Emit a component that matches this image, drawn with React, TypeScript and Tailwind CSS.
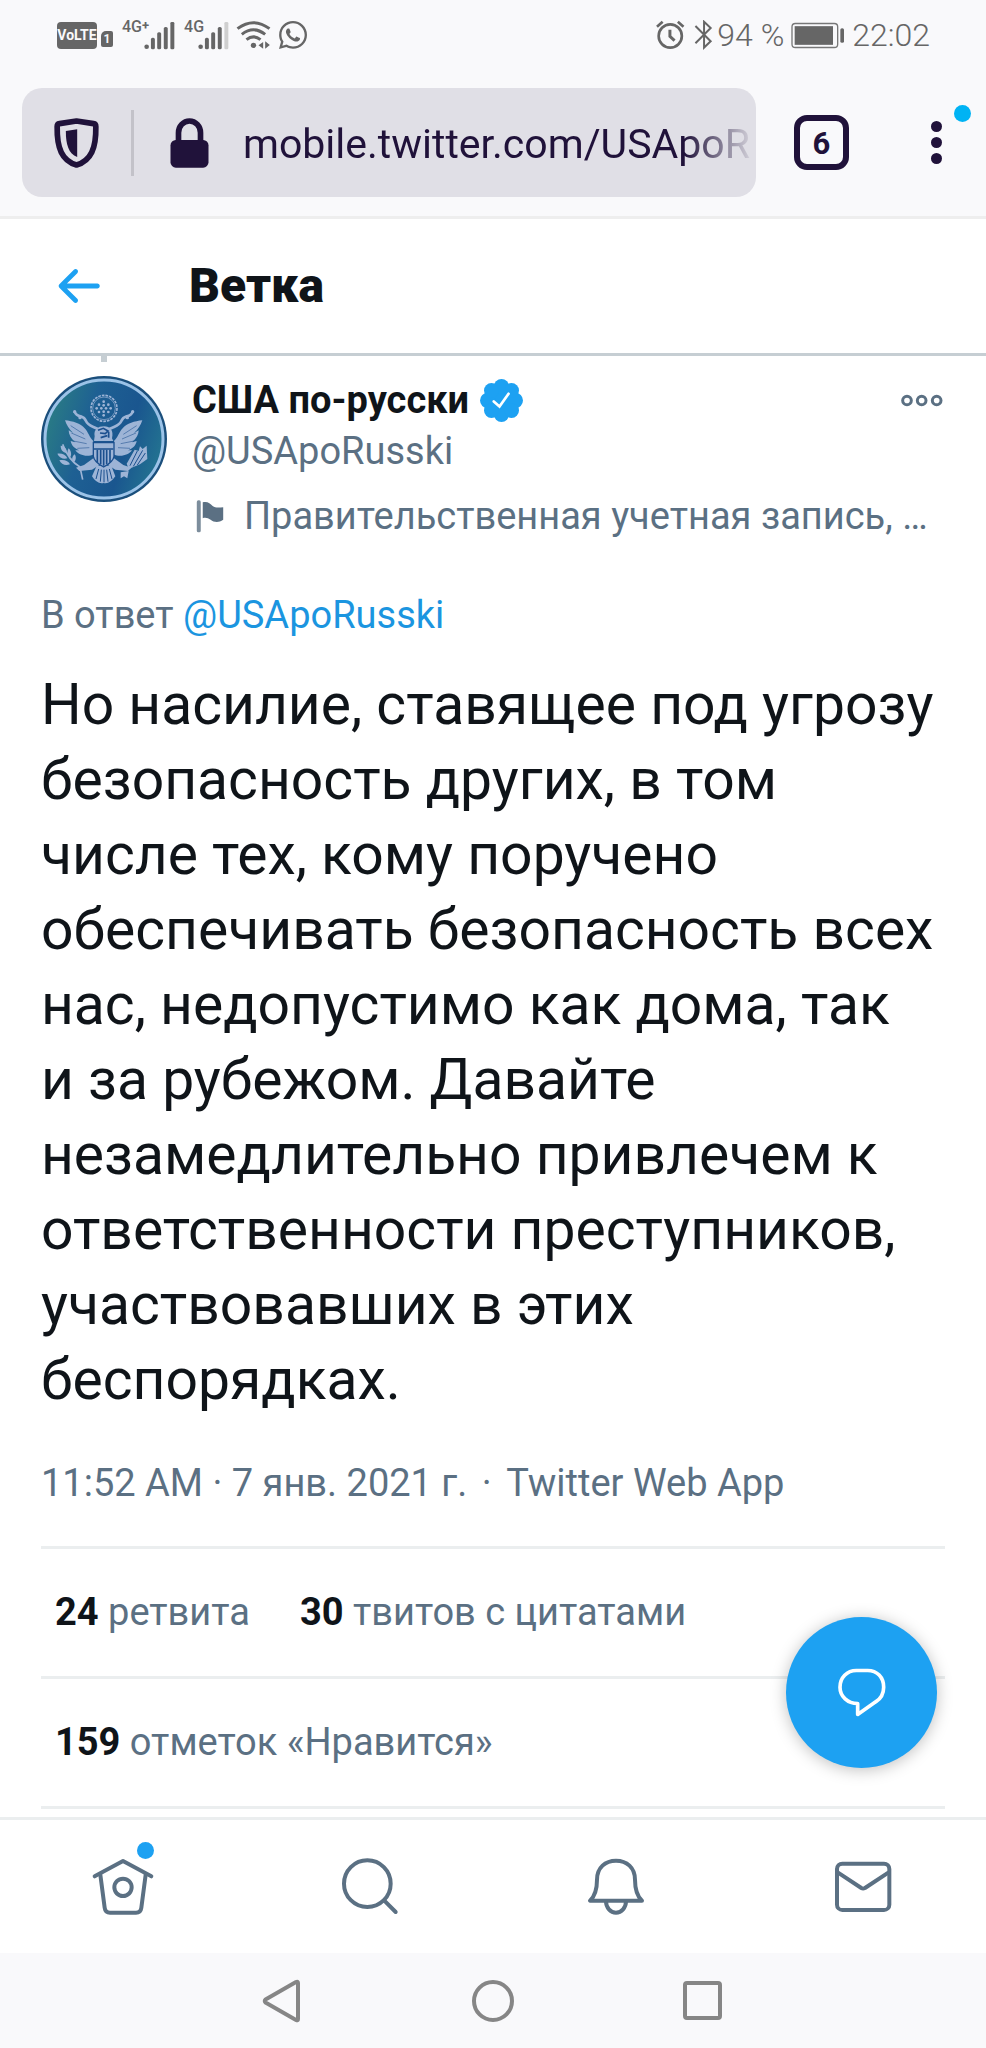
import React from "react";
import { FaWhatsapp } from "react-icons/fa";

function SignalBars({ weakLast = false }: { weakLast?: boolean }) {
  return (
    <svg viewBox="310 54 94 88" className="h-[29px] w-[31px] shrink-0" fill="#666" aria-hidden="true">
      <circle cx="318" cy="132" r="7" />
      <rect x="331" y="105" width="12" height="35" rx="5" />
      <rect x="350" y="88" width="12" height="52" rx="5" />
      <rect x="370" y="72" width="12" height="68" rx="5" />
      <rect x="390" y="57" width="12" height="83" rx="4" fill={weakLast ? "#cfcfcf" : "#666"} />
    </svg>
  );
}

function StatusBar() {
  return (
    <div className="flex h-[70px] items-center justify-between pr-14 pl-[57px] text-[#666]">
      <div className="flex items-center">
        <span className="flex h-[27px] w-10 items-center justify-center rounded-[4px] bg-[#666] text-[14px] font-bold text-[#f9f9fb]">
          VoLTE
        </span>
        <span className="mt-2 ml-1 flex h-4 w-3 items-center justify-center rounded-[2px] rounded-tl-[5px] bg-[#666] text-[12px] font-bold text-[#f9f9fb]">
          1
        </span>
        <span className="mb-4 ml-[9px] text-[16px] leading-[16px] font-medium">4G</span>
        <span className="mb-5 -mr-[5px] text-[13px] leading-[13px] font-bold">+</span>
        <SignalBars />
        <span className="mb-4 ml-[9px] -mr-[6px] text-[16px] leading-[16px] font-medium">4G</span>
        <SignalBars weakLast />
        <svg viewBox="592 54 104 90" className="ml-[7px] h-[30px] w-[35px]" fill="none" stroke="#666" strokeWidth="9" aria-hidden="true">
          <path d="M596 80Q644 44 692 80" />
          <path d="M609 97Q644 70 679 97" />
          <path d="M623 113Q644 96 665 113" />
          <circle cx="644" cy="130" r="8" fill="#666" stroke="none" />
          <path d="M659 130l14-10v20zM679 118l14 11-14 11z" fill="#666" stroke="none" />
        </svg>
        <FaWhatsapp className="ml-[6px] h-8 w-8" aria-hidden="true" />
      </div>
      <div className="flex items-center">
        <svg viewBox="50 54 172 90" className="h-[30px] w-[57px]" fill="none" stroke="#666" aria-hidden="true">
          <circle cx="93" cy="102" r="35" strokeWidth="8" />
          <path d="M92 83v20l14 13" strokeWidth="9" />
          <path d="M53 74l17-15M116 59l17 15" strokeWidth="8" />
          <path d="M169 72l46 46-20 19V59l20 19-46 46" strokeWidth="6" />
        </svg>
        <span className="ml-1 text-[32px] leading-[36px] font-light">94 %</span>
        <svg viewBox="454 60 162 80" className="ml-[7px] h-[27px] w-[54px]" aria-hidden="true">
          <rect x="457" y="64" width="137" height="72" rx="10" fill="none" stroke="#777" strokeWidth="4" />
          <rect x="465" y="72" width="115" height="56" fill="#666" />
          <rect x="602" y="78" width="11" height="44" rx="5" fill="#666" />
        </svg>
        <span className="ml-[7px] text-[32px] leading-[36px] font-light">22:02</span>
      </div>
    </div>
  );
}

function AddressBar() {
  return (
    <div className="flex items-center border-b-3 border-[#eeeeee] pt-[18px] pr-[44px] pb-[19px] pl-[22px]">
      <div className="flex h-[109px] min-w-0 flex-1 items-center rounded-[20px] bg-[#e0dfe6] pl-[32px]">
        <svg viewBox="163 142 134 150" className="h-[50px] w-[45px] shrink-0" aria-hidden="true">
          <path
            d="M230 151L281 159Q288 160 288 168C289 232 274 270 230 283C186 270 171 232 172 168Q172 160 179 159Z"
            fill="none"
            stroke="#20123a"
            strokeWidth="17"
            strokeLinejoin="round"
          />
          <path d="M232 176v83C206 249 198 222 198 181z" fill="#20123a" />
        </svg>
        <span className="ml-[32px] h-[66px] w-[3px] shrink-0 bg-[#c3c2c9]" />
        <svg viewBox="509 142 116 150" className="ml-9 h-[50px] w-[39px] shrink-0" aria-hidden="true">
          <path d="M534 216v-30a33 35 0 0 1 66 0v30" fill="none" stroke="#20123a" strokeWidth="17" />
          <rect x="510" y="208" width="114" height="83" rx="16" fill="#20123a" />
        </svg>
        <input
          type="text"
          aria-label="URL"
          defaultValue="mobile.twitter.com/USApoR"
          className="ml-[34px] h-[66px] min-w-0 flex-1 bg-transparent pt-[2px] text-[41px] text-[#20123a] outline-none [mask-image:linear-gradient(to_right,black_86%,transparent)]"
        />
      </div>
      <button
        type="button"
        className="ml-[38px] flex h-[55px] w-[55px] shrink-0 items-center justify-center rounded-[13px] border-6 border-[#20123a] pt-[2px] text-[31px] leading-none font-bold text-[#20123a]"
      >
        6
      </button>
      <button type="button" aria-label="Menu" className="relative ml-[82px] flex shrink-0 flex-col gap-[5px]">
        <span className="h-[11px] w-[11px] rounded-full bg-[#20123a]" />
        <span className="h-[11px] w-[11px] rounded-full bg-[#20123a]" />
        <span className="h-[11px] w-[11px] rounded-full bg-[#20123a]" />
        <span className="absolute -top-4 left-[23px] h-[17px] w-[17px] rounded-full bg-[#00b3f4]" />
      </button>
    </div>
  );
}

function PageHeader() {
  return (
    <header className="flex h-[137px] items-center border-b-3 border-[#c6ced3] bg-white pl-[49px]">
      <a href="#back" aria-label="Back" className="text-[#1da1f2]">
        <svg viewBox="0 0 24 24" className="h-[58px] w-[58px]" fill="currentColor" aria-hidden="true">
          <path d="M20 11H7.414l4.293-4.293c.39-.39.39-1.023 0-1.414s-1.023-.39-1.414 0l-6 6c-.39.39-.39 1.023 0 1.414l6 6c.195.195.45.293.707.293s.512-.098.707-.293c.39-.39.39-1.023 0-1.414L7.414 13H20c.553 0 1-.447 1-1s-.447-1-1-1z" />
        </svg>
      </a>
      <h1 className="ml-[82px] text-[48px] leading-[56px] font-black text-[#0f1419]">Ветка</h1>
    </header>
  );
}

const stars = [
  [221, 154], [207, 163], [221, 165], [235, 163], [200, 174], [214, 174], [228, 174], [242, 174], [207, 185], [221, 184], [235, 185], [221, 195],
];

function Seal() {
  return (
    <svg viewBox="33 77 378 378" className="h-[126px] w-[126px] shrink-0" role="img" aria-label="США по-русски">
      <defs>
        <linearGradient id="sea" x1="0" y1="0.3" x2="1" y2="0.6">
          <stop offset="0" stopColor="#2a7d84" />
          <stop offset="0.35" stopColor="#1e6093" />
          <stop offset="0.7" stopColor="#1a568f" />
          <stop offset="1" stopColor="#237391" />
        </linearGradient>
        <g id="wing">
          <path d="M192 312C170 322 146 314 136 300L148 300C132 294 124 284 122 272L136 276C122 264 116 252 116 240L130 248C116 236 110 224 105 210C128 212 152 220 164 234C176 246 178 262 190 272Z" />
          <path d="M134 184Q138 196 152 198Q164 202 168 212T190 230L204 236" fill="none" stroke="#9db4d6" strokeWidth="8" />
          <circle cx="134" cy="184" r="5" />
          <circle cx="150" cy="202" r="5" />
          <path d="M192 322L162 344 138 352 148 362 186 358 208 344Z" />
        </g>
      </defs>
      <circle cx="222" cy="266" r="189" fill="#1b4f7c" />
      <circle cx="222" cy="266" r="177" fill="url(#sea)" stroke="#9cc3e8" strokeWidth="9" />
      <circle cx="222" cy="174" r="39" fill="none" stroke="#9db4d6" strokeWidth="5" strokeDasharray="8 3" />
      <circle cx="222" cy="174" r="34" fill="none" stroke="#9db4d6" strokeWidth="2" />
      {stars.map(([x, y]) => (
        <circle key={`${x}-${y}`} cx={x} cy={y} r="4" fill="#9db4d6" />
      ))}
      <g fill="#9db4d6">
        <use href="#wing" />
        <use href="#wing" transform="translate(442 0) scale(-1 1)" />
        <path d="M194 258C190 238 204 228 222 228C240 228 252 240 246 264L250 272H192Z" />
        <path d="M200 346L244 346 256 378Q240 402 221 398Q200 402 186 378Z" />
        <path d="M190 276H252V318C252 334 236 342 221 350C206 342 190 334 190 318Z" />
        <path d="M92 286c14 2 20 12 18 22c-12-2-18-10-18-22zM116 294c8 8 10 20 4 28c-8-8-10-18-4-28zM82 310c14-2 26 4 30 14c-12 4-24-2-30-14zM88 330c14-4 28 2 32 12c-14 6-26 0-32-12zM134 312c6 8 4 20-4 26c-6-10-4-20 4-26z" />
        <path d="M290 340L314 298 326 302 330 288 338 296 350 286 352 326 330 342 296 356ZM272 366l24-4-4 22-10-6-10 6z" />
      </g>
      <path d="M98 282Q116 330 150 350L158 388" fill="none" stroke="#9db4d6" strokeWidth="5" />
      <g fill="none" stroke="#1b4f8e">
        <path d="M190 276h62M192 296h58" strokeWidth="5" />
        <path d="M202 298v38M212 298v44M221 298v48M230 298v44M240 298v38" strokeWidth="5" />
        <path d="M204 240l16-6 14 8-8 8-16-2M236 244v18M212 262l20-6" strokeWidth="5" />
        <path d="M190 274v44q2 16 31 32q29-16 31-32v-44" strokeWidth="4" />
        <path d="M206 356l-8 30M214 358l-3 36M222 358v38M230 358l4 36M238 356l8 30" strokeWidth="3" />
        <path d="M300 346l22-44M310 348l28-48M322 344l24-36" strokeWidth="3" />
        <path d="M122 226l40 26M124 248l42 18M130 272l40 8M142 294l36-2M320 226l-40 26M318 248l-42 18M312 272l-40 8M300 294l-36-2" strokeWidth="3" opacity="0.55" />
      </g>
    </svg>
  );
}

function VerifiedBadge() {
  return (
    <svg viewBox="898 56 128 128" className="ml-[11px] h-[43px] w-[43px]" role="img" aria-label="Verified">
      <g fill="#1da1f2">
        <circle cx="962" cy="120" r="53" />
        <circle cx="962" cy="79" r="23" />
        <circle cx="962" cy="161" r="23" />
        <circle cx="921" cy="120" r="23" />
        <circle cx="1003" cy="120" r="23" />
        <circle cx="932" cy="90" r="22" />
        <circle cx="992" cy="90" r="22" />
        <circle cx="932" cy="150" r="22" />
        <circle cx="992" cy="150" r="22" />
      </g>
      <path d="M939 123l17 15 27-38" fill="none" stroke="#fff" strokeWidth="8" strokeLinecap="round" />
    </svg>
  );
}

function Stat({ count, label }: { count: string; label: string }) {
  return (
    <a href="#stats">
      <b className="font-bold text-[#0f1419]">{count}</b> {label}
    </a>
  );
}

function Tweet() {
  return (
    <article className="px-[41px] text-[38px] leading-[51px] text-[#5b7083]">
      <div className="ml-[60px] h-[6px] w-[6px] bg-[#c6ced3]" />
      <div className="mt-[13px] flex">
        <div className="pt-px">
          <Seal />
        </div>
        <div className="ml-[25px] min-w-0 flex-1">
          <div className="flex items-center">
            <span className="font-bold text-[#0f1419]">США по-русски</span>
            <VerifiedBadge />
            <button type="button" aria-label="More" className="mr-[2px] ml-auto">
              <svg viewBox="962 101 126 38" className="h-[13px] w-[42px]" fill="none" stroke="#5b7083" strokeWidth="9" aria-hidden="true">
                <circle cx="980" cy="120" r="13" />
                <circle cx="1024" cy="120" r="13" />
                <circle cx="1069" cy="120" r="13" />
              </svg>
            </button>
          </div>
          <div>@USApoRusski</div>
          <div className="mt-[14px] flex items-center">
            <svg viewBox="50 414 84 100" className="ml-1 h-[33px] w-[28px] shrink-0" fill="#5b7083" aria-hidden="true">
              <rect x="52" y="415" width="12" height="97" rx="5" opacity="0.8" />
              <path d="M70 421C84 417 92 424 100 432C110 440 122 436 132 436V474C118 484 104 482 94 474C86 468 78 466 70 469Z" />
            </svg>
            <span className="ml-[20px] whitespace-nowrap">Правительственная учетная запись, …</span>
          </div>
        </div>
      </div>
      <div className="mt-12">
        В ответ <a href="#user" className="text-[#1b95e0]">@USApoRusski</a>
      </div>
      <p className="mt-[26px] text-[57px] leading-[75px] text-[#0f1419]">
        Но насилие, ставящее под угрозу безопасность других, в том числе тех, кому поручено обеспечивать безопасность всех нас, недопустимо как дома, так и&nbsp;за&nbsp;рубежом. Давайте незамедлительно привлечем к ответственности преступников, участвовавших в этих беспорядках.
      </p>
      <div className="mt-[41px] pb-[37px]">
        11:52 AM · 7 янв. 2021 г. <span className="mx-[5px]">·</span> <a href="#source">Twitter Web App</a>
      </div>
      <div className="flex h-[130px] items-center gap-[50px] border-t-3 border-[#ebeeef] px-[14px]">
        <Stat count="24" label="ретвита" />
        <Stat count="30" label="твитов с цитатами" />
      </div>
      <div className="flex h-[133px] items-center border-y-3 border-[#ebeeef] px-[14px]">
        <Stat count="159" label="отметок «Нравится»" />
      </div>
    </article>
  );
}

function TabBar() {
  const icon = "h-[60px] w-[64px]";
  const cell = "flex items-center justify-center";
  return (
    <nav className="grid h-[136px] grid-cols-4 border-t-3 border-[#ebeeef] bg-white text-[#5b7083]">
      <a href="#home" aria-label="Home" className={cell}>
        <span className="relative">
          <svg viewBox="273 172 192 180" className={icon} fill="none" stroke="currentColor" strokeWidth="12" strokeLinecap="round" strokeLinejoin="round" aria-hidden="true">
            <path d="M284 230L369 184 454 230" />
            <path d="M301 225L314 324Q316 339 330 339H408Q422 339 424 324L437 225" />
            <circle cx="369" cy="263" r="26" />
          </svg>
          <span className="absolute -top-[15px] right-px h-[17px] w-[17px] rounded-full bg-[#1da1f2]" />
        </span>
      </a>
      <a href="#search" aria-label="Search" className={cell}>
        <svg viewBox="1012 172 192 180" className={icon} fill="none" stroke="currentColor" strokeWidth="12" strokeLinecap="round" aria-hidden="true">
          <circle cx="1100" cy="252" r="70" />
          <path d="M1151 303l34 34" />
        </svg>
      </a>
      <a href="#notifications" aria-label="Notifications" className={cell}>
        <svg viewBox="294 172 192 180" className={icon} fill="none" stroke="currentColor" strokeWidth="12" strokeLinejoin="round" aria-hidden="true">
          <path d="M312 303H468C452 288 447 268 447 240C447 204 422 183 390 183C358 183 333 204 333 240C333 268 328 288 312 303Z" />
          <path d="M360 305a30 34 0 0 0 60 0" />
        </svg>
      </a>
      <a href="#messages" aria-label="Messages" className={cell}>
        <svg viewBox="1034 172 192 180" className={icon} fill="none" stroke="currentColor" strokeWidth="12" strokeLinejoin="round" aria-hidden="true">
          <rect x="1052" y="192" width="157" height="139" rx="16" />
          <path d="M1054 218L1125 265Q1130 268 1136 265L1207 218" />
        </svg>
      </a>
    </nav>
  );
}

function SystemNav() {
  const icon = "h-[44px] w-[44px]";
  return (
    <div className="flex h-[95px] items-center justify-center gap-[166px] bg-[#f9f9fb] text-[#868686]">
      <button type="button" aria-label="Back">
        <svg viewBox="0 0 44 44" className={icon} fill="none" stroke="currentColor" strokeWidth="4" strokeLinejoin="round" aria-hidden="true">
          <path d="M4.500 20.500Q3 22 4.500 23.500L35 41Q37 42 37 40V4Q37 2 35 3Z" />
        </svg>
      </button>
      <button type="button" aria-label="Home">
        <svg viewBox="0 0 44 44" className={icon} fill="none" stroke="currentColor" strokeWidth="4" aria-hidden="true">
          <circle cx="22" cy="22" r="19" />
        </svg>
      </button>
      <button type="button" aria-label="Recents">
        <svg viewBox="0 0 44 44" className={icon} fill="none" stroke="currentColor" strokeWidth="4" aria-hidden="true">
          <rect x="4" y="4" width="35" height="35" rx="2" />
        </svg>
      </button>
    </div>
  );
}

export default function App() {
  return (
    <div className="flex min-h-screen flex-col bg-[#f9f9fb] font-[Roboto,sans-serif]">
      <StatusBar />
      <AddressBar />
      <PageHeader />
      <main className="relative flex-1 bg-white">
        <Tweet />
        <button
          type="button"
          aria-label="Reply"
          className="absolute right-[49px] bottom-[49px] flex h-[151px] w-[151px] items-center justify-center rounded-full bg-[#1da1f2] shadow-[0_2px_16px_rgba(0,0,0,0.25)]"
        >
          <svg viewBox="230 202 150 152" className="h-[51px] w-[50px]" fill="none" stroke="#fff" strokeWidth="11" strokeLinejoin="round" aria-hidden="true">
            <path d="M292 311V344L346 306C362 296 370 282 370 262C370 232 350 212 322 212H288C260 212 239 234 239 262C239 290 262 311 292 311Z" />
          </svg>
        </button>
      </main>
      <TabBar />
      <SystemNav />
    </div>
  );
}
